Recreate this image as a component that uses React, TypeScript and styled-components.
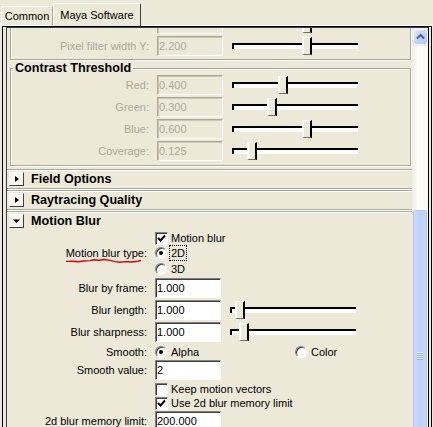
import React from 'react';
import styled, { createGlobalStyle } from 'styled-components';

const GlobalStyle = createGlobalStyle`
  html, body { margin: 0; padding: 0; background: #ece9d8; }
  body {
    font-family: 'Liberation Sans', Arial, sans-serif;
    font-size: 11px;
    color: #000;
  }
  * { box-sizing: border-box; }
`;

const Screen = styled.div`
  width: 433px;
  height: 427px;
  overflow: hidden;
  display: flex;
  flex-direction: column;
  background: #ece9d8;
`;

const TabBar = styled.div`
  height: 26px;
  flex: none;
  display: flex;
  align-items: flex-end;
  padding-left: 1px;
  border-bottom: 1px solid #fff;
`;

const Tab = styled.div<{ $active?: boolean; $w: number }>`
  width: ${p => p.$w}px;
  height: ${p => (p.$active ? 23 : 19)}px;
  margin-bottom: ${p => (p.$active ? -1 : 0)}px;
  padding-bottom: ${p => (p.$active ? 1 : 0)}px;
  display: flex;
  align-items: center;
  justify-content: center;
  background: #ece9d8;
  border: 1px solid;
  border-bottom: none;
  border-color: #fff ${p => (p.$active ? '#404040' : '#aca899')} transparent #fff;
  border-radius: 2px 2px 0 0;
  position: relative;
`;

const Panel = styled.div`
  flex: 1;
  min-height: 0;
  width: 430px;
  margin-left: 2px;
  padding: 0 2px 0 3px;
  border: 1px solid #000;
  border-bottom: none;
  display: flex;
`;

const Inner = styled.div`
  flex: 1;
  min-width: 0;
  display: flex;
  border: 1px solid;
  border-bottom: none;
  border-color: #404040 #000 transparent #404040;
  overflow: hidden;
`;

const Viewport = styled.div`
  flex: 1;
  min-width: 0;
  overflow: hidden;
`;

const Content = styled.div`
  margin-top: -17px;
  display: flex;
  flex-direction: column;
`;

const Frame = styled.div<{ $mt?: number; $pt: number; $pb: number }>`
  margin: ${p => p.$mt ?? 0}px 1px 0 3px;
  padding: ${p => p.$pt}px 0 ${p => p.$pb}px;
  border: 1px solid #aca899;
  box-shadow: inset 1px 1px 0 #fff, 1px 1px 0 #fff;
`;

const Legend = styled.div`
  width: fit-content;
  margin: -8px 0 0 2px;
  padding: 0 2px;
  height: 14px;
  line-height: 14px;
  background: #ece9d8;
  font-weight: bold;
  font-size: 12.6px;
  position: relative;
`;

const Stack = styled.div`
  display: flex;
  flex-direction: column;
  gap: 2px;
`;

const Row = styled.div<{ $h?: number; $mt?: number }>`
  display: flex;
  align-items: center;
  height: ${p => p.$h ?? 20}px;
  margin-top: ${p => p.$mt ?? 0}px;
  white-space: nowrap;
`;

const Label = styled.div<{ $w: number; $dim?: boolean }>`
  width: ${p => p.$w}px;
  flex: none;
  margin-right: 8px;
  text-align: right;
  color: ${p => (p.$dim ? '#aca899' : '#000')};
`;

const Marked = styled.span`
  position: relative;
  display: inline-block;
`;

const Squiggle = styled.svg`
  position: absolute;
  left: 0;
  top: 100%;
  width: 76px;
  height: 5px;
  overflow: visible;
`;

const Field = styled.input`
  width: 66px;
  height: 20px;
  flex: none;
  margin: 0;
  padding: 0 1px;
  font: 11px 'Liberation Sans', Arial, sans-serif;
  color: #000;
  background: #fff;
  border: 1px solid;
  border-color: #808080 #fff #fff #808080;
  box-shadow: inset 1px 1px 0 #404040;
  outline: none;
  opacity: 1;

  &:disabled {
    color: #aca899;
    -webkit-text-fill-color: #aca899;
    background: #ece9d8;
    border-color: #aca899 #fff #fff #aca899;
    box-shadow: inset 1px 1px 0 #c9c6b8;
  }
`;

const SliderBox = styled.div`
  position: relative;
  width: 126px;
  height: 20px;
  margin-left: 9px;
  flex: none;
`;

const Groove = styled.div`
  margin-top: 7px;
  height: 6px;
  border-top: 2px solid #000;
  border-left: 2px solid #000;
  background: #fff;
`;

const Thumb = styled.div`
  position: absolute;
  top: 1px;
  width: 10px;
  height: 18px;
  background: #ece9d8;
  border-left: 2px solid #fff;
  border-top: 1px solid #fff;
  border-right: 2px solid #000;
  border-bottom: 1px solid #716f64;
`;

const Option = styled.div<{ $w?: number }>`
  display: flex;
  align-items: center;
  width: ${p => (p.$w ? `${p.$w}px` : 'auto')};
  flex: none;
`;

const RadioDot = styled.span<{ $on?: boolean }>`
  width: 12px;
  height: 12px;
  flex: none;
  border-radius: 50%;
  background: #fff;
  border: 1px solid;
  border-color: #808080 #fff #fff #808080;
  box-shadow: inset 1px 1px 0 #404040;
  display: flex;
  align-items: center;
  justify-content: center;

  &::after {
    content: '';
    width: 4px;
    height: 4px;
    border-radius: 50%;
    background: ${p => (p.$on ? '#000' : 'transparent')};
  }
`;

const CheckBox = styled.span`
  width: 13px;
  height: 13px;
  flex: none;
  background: #fff;
  border: 1px solid;
  border-color: #808080 #fff #fff #808080;
  box-shadow: inset 1px 1px 0 #404040;
  display: flex;
  align-items: center;
  justify-content: center;
`;

const OptText = styled.span<{ $focus?: boolean; $ml?: number }>`
  margin-left: ${p => p.$ml ?? 2}px;
  padding: 1px;
  line-height: 12px;
  border: 1px dotted ${p => (p.$focus ? '#000' : 'transparent')};
`;

const Fold = styled.div<{ $mt: number }>`
  margin-top: ${p => p.$mt}px;
  border-top: 1px solid #aca899;
  border-bottom: 1px solid #aca899;
  box-shadow: inset 0 1px 0 #fff, 0 1px 0 #fff;
`;

const FoldHead = styled.div`
  height: 18px;
  display: flex;
  align-items: center;
  gap: 7px;
  padding-left: 2px;
  font-weight: bold;
  font-size: 12.6px;
`;

const FoldButton = styled.span`
  width: 15px;
  height: 14px;
  flex: none;
  background: #f7f6f1;
  border: 1px solid;
  border-color: #fff #404040 #404040 #fff;
  display: flex;
`;

const FoldBody = styled.div`
  padding-top: 1px;
  display: flex;
  flex-direction: column;
`;

const ScrollBar = styled.div`
  width: 16px;
  flex: none;
  display: flex;
  flex-direction: column;
  background: linear-gradient(to right, #eeede5, #fdfdfa 40%, #f8f7f2);
`;

const ScrollButton = styled.div`
  width: 15px;
  height: 16px;
  margin: 1px 0 0 1px;
  flex: none;
  border: 1px solid #fff;
  border-radius: 3px;
  background: linear-gradient(135deg, #dde7fe, #bccffb 60%, #b0c6f8);
  box-shadow: 0 0 0 0.5px #c9d7f6;
  display: flex;
`;

const ScrollThumb = styled.div`
  width: 14px;
  height: 292px;
  margin: 165px 0 0 1px;
  flex: none;
  border: 1px solid #b1c6f6;
  border-radius: 2px;
  background: linear-gradient(to right, #cbdafe, #bcd0fb 50%, #c6d6fd);
  display: flex;
  flex-direction: column;
  align-items: center;
  justify-content: center;
`;

const Grip = styled.span`
  width: 6px;
  height: 2px;
  border-top: 1px solid #eef4fe;
  border-bottom: 1px solid #8cb0f8;
`;

type Fld = { label: string; value: string; thumb?: number; dim?: boolean; w: number; mt?: number };

const FieldLine: React.FC<Fld> = ({ label, value, thumb, dim, w, mt }) => (
  <Row $mt={mt}>
    <Label $w={w} $dim={dim}>{label}</Label>
    <Field defaultValue={value} disabled={dim} readOnly />
    {thumb !== undefined && (
      <SliderBox>
        <Groove />
        <Thumb style={{ left: thumb }} />
      </SliderBox>
    )}
  </Row>
);

const Check: React.FC<{ on?: boolean }> = ({ on }) => (
  <CheckBox>
    {on && (
      <svg width="9" height="9" viewBox="0 0 9 9">
        <polyline points="1,4 3.5,6.5 8,1.5" fill="none" stroke="#000" strokeWidth="2" />
      </svg>
    )}
  </CheckBox>
);

const FoldIcon: React.FC<{ open?: boolean }> = ({ open }) => (
  <FoldButton>
    <svg width="13" height="12" viewBox="0 0 13 12">
      {open ? <polygon points="3,4.5 10,4.5 6.5,8" fill="#000" /> : <polygon points="5,3 9,6 5,9" fill="#000" />}
    </svg>
  </FoldButton>
);

const MB = 140;
const TOP = 138;

export default function App() {
  return (
    <Screen>
      <GlobalStyle />
      <TabBar>
        <Tab $w={52}>Common</Tab>
        <Tab $w={88} $active>Maya Software</Tab>
      </TabBar>
      <Panel>
        <Inner>
          <Viewport>
            <Content>
              <Frame $pt={2} $pb={3}>
                <Stack>
                  {/* row scrolled above the visible area: only its lower edge shows */}
                  <FieldLine w={TOP} dim label="" value="" thumb={70} />
                  <FieldLine w={TOP} dim label="Pixel filter width Y:" value="2.200" thumb={70} />
                </Stack>
              </Frame>

              <Frame $mt={8} $pt={0} $pb={4}>
                <Legend>Contrast Threshold</Legend>
                <Stack>
                  <FieldLine w={TOP} dim label="Red:" value="0.400" thumb={46} />
                  <FieldLine w={TOP} dim label="Green:" value="0.300" thumb={35} />
                  <FieldLine w={TOP} dim label="Blue:" value="0.600" thumb={70} />
                  <FieldLine w={TOP} dim label="Coverage:" value="0.125" thumb={15} />
                </Stack>
              </Frame>

              <Fold $mt={3}>
                <FoldHead><FoldIcon />Field Options</FoldHead>
              </Fold>
              <Fold $mt={1}>
                <FoldHead><FoldIcon />Raytracing Quality</FoldHead>
              </Fold>
              <Fold $mt={1}>
                <FoldHead><FoldIcon open />Motion Blur</FoldHead>
                <FoldBody>
                  <Row $h={14}>
                    <Label $w={MB} />
                    <Option><Check on /><OptText $ml={1}>Motion blur</OptText></Option>
                  </Row>
                  <Row $h={16}>
                    <Label $w={MB}>
                      <Marked>
                        Motion blur type:
                        <Squiggle viewBox="0 0 76 5">
                          <polyline
                            points="0,2.4 6,2.2 12,2.8 18,2 24,1.6 28,0.8 33,1.2 38,0.5 44,1.4 49,2.6 54,3.2 60,2.6 66,3 72,2.2 75,1.4"
                            fill="none"
                            stroke="#e20000"
                            strokeWidth="1.4"
                          />
                        </Squiggle>
                      </Marked>
                    </Label>
                    <Option><RadioDot $on /><OptText $focus>2D</OptText></Option>
                  </Row>
                  <Row $h={16}>
                    <Label $w={MB} />
                    <Option><RadioDot /><OptText>3D</OptText></Option>
                  </Row>
                  <FieldLine w={MB} mt={1} label="Blur by frame:" value="1.000" />
                  <FieldLine w={MB} mt={2} label="Blur length:" value="1.000" thumb={5} />
                  <FieldLine w={MB} mt={2} label="Blur sharpness:" value="1.000" thumb={9} />
                  <Row $h={16} $mt={2}>
                    <Label $w={MB}>Smooth:</Label>
                    <Option $w={140}><RadioDot $on /><OptText>Alpha</OptText></Option>
                    <Option><RadioDot /><OptText>Color</OptText></Option>
                  </Row>
                  <FieldLine w={MB} label="Smooth value:" value="2" />
                  <Row $h={14} $mt={2}>
                    <Label $w={MB} />
                    <Option><Check /><OptText $ml={1}>Keep motion vectors</OptText></Option>
                  </Row>
                  <Row $h={14}>
                    <Label $w={MB} />
                    <Option><Check on /><OptText $ml={1}>Use 2d blur memory limit</OptText></Option>
                  </Row>
                  <FieldLine w={MB} mt={1} label="2d blur memory limit:" value="200.000" />
                </FoldBody>
              </Fold>
            </Content>
          </Viewport>
          <ScrollBar>
            <ScrollButton>
              <svg width="13" height="14" viewBox="0 0 13 14">
                <polyline points="3,8.5 6.5,5 10,8.5" fill="none" stroke="#4d6185" strokeWidth="2" />
              </svg>
            </ScrollButton>
            <ScrollThumb>
              <Grip />
              <Grip />
              <Grip />
              <Grip />
            </ScrollThumb>
          </ScrollBar>
        </Inner>
      </Panel>
    </Screen>
  );
}
